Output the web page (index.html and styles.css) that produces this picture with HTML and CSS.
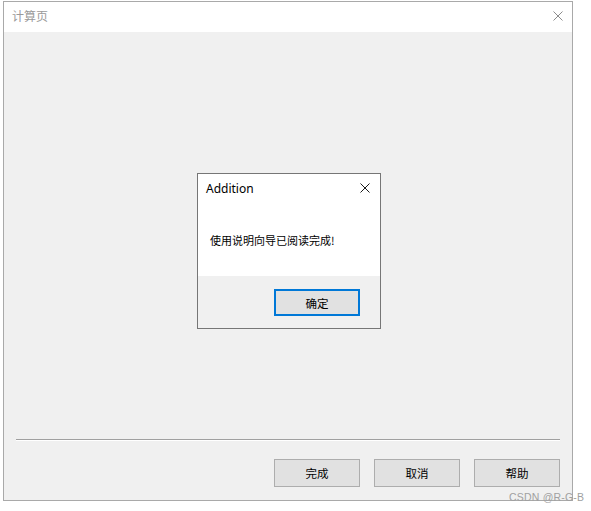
FILE: index.html
```html
<!DOCTYPE html>
<html>
<head>
<meta charset="utf-8">
<link rel="stylesheet" href="styles.css">
</head>
<body>
<div class="window">
  <div class="titlebar">
    <span class="title">计算页</span>
    <svg class="win-close" width="10" height="10" viewBox="0 0 10 10"><path d="M0.5 0.5L9.5 9.5M9.5 0.5L0.5 9.5" stroke="#8c8c8c" stroke-width="1"/></svg>
  </div>
  <div class="content">
    <div class="separator"></div>
    <div class="actions">
      <button class="btn">完成</button>
      <button class="btn">取消</button>
      <button class="btn">帮助</button>
    </div>
  </div>
</div>

<div class="dialog">
  <div class="dlg-main">
    <div class="dlg-title">
      <span class="dlg-caption">Addition</span>
      <svg class="dlg-close" width="10" height="10" viewBox="0 0 10 10"><path d="M0.5 0.5L9.5 9.5M9.5 0.5L0.5 9.5" stroke="#1a1a1a" stroke-width="1"/></svg>
    </div>
    <div class="dlg-msg">使用说明向导已阅读完成!</div>
  </div>
  <div class="dlg-foot">
    <button class="btn btn-default">确定</button>
  </div>
</div>

<div class="watermark">CSDN @R-G-B</div>
</body>
</html>
```
FILE: styles.css
```css
html, body {
  margin: 0;
  padding: 0;
  background: #ffffff;
}
body {
  font-family: "Noto Sans", "Noto Sans CJK SC", sans-serif;
  position: relative;
  width: 591px;
  height: 511px;
  overflow: hidden;
}
.window {
  margin: 1px 0 0 3px;
  width: 570px;
  height: 500px;
  box-sizing: border-box;
  border: 1px solid #a9a9a9;
  display: flex;
  flex-direction: column;
  background: #f0f0f0;
}
.titlebar {
  height: 30px;
  flex: none;
  background: #ffffff;
  display: flex;
  align-items: center;
  justify-content: space-between;
  padding: 0 9px 0 8px;
}
.title {
  font-family: "Noto Sans CJK SC", sans-serif;
  font-size: 12px;
  color: #9a9a9a;
  line-height: 14px;
  margin-top: -2px;
}
.win-close {
  display: block;
  margin-top: -2px;
}
.content {
  flex: 1;
  display: flex;
  flex-direction: column;
  justify-content: flex-end;
  padding: 0 12px 13px 12px;
}
.separator {
  height: 1px;
  background: #a0a0a0;
  border-bottom: 1px solid #ffffff;
  margin-bottom: 18px;
}
.actions {
  display: flex;
  justify-content: flex-end;
  gap: 14px;
}
.btn {
  width: 86px;
  height: 28px;
  box-sizing: border-box;
  border: 1px solid #adadad;
  background: #e1e1e1;
  font-family: "Noto Sans CJK SC", sans-serif;
  font-size: 11.5px;
  color: #000;
  padding: 0;
  margin: 0;
  line-height: 14px;
}
.btn-default {
  height: 27px;
  border: 2px solid #0078d7;
}
.dialog {
  position: absolute;
  left: 197px;
  top: 173px;
  width: 184px;
  height: 156px;
  box-sizing: border-box;
  border: 1px solid #767676;
  background: #f0f0f0;
  display: flex;
  flex-direction: column;
}
.dlg-main {
  height: 102px;
  flex: none;
  background: #ffffff;
}
.dlg-title {
  height: 30px;
  display: flex;
  align-items: center;
  justify-content: space-between;
  padding: 0 10px 0 8px;
}
.dlg-caption {
  font-size: 12px;
  color: #000;
  line-height: 16px;
  margin-top: -1px;
}
.dlg-close {
  display: block;
  margin-top: -2px;
}
.dlg-msg {
  margin-top: 28px;
  padding-left: 12px;
  font-family: "Noto Sans CJK SC", sans-serif;
  font-size: 11px;
  line-height: 16px;
  color: #000;
}
.dlg-foot {
  flex: 1;
  display: flex;
  justify-content: flex-end;
  align-items: flex-start;
  padding: 13px 20px 0 0;
}
.watermark {
  position: absolute;
  left: 509px;
  top: 491px;
  font-family: "Liberation Sans", sans-serif;
  font-size: 10.5px;
  color: #a0a0a0;
  letter-spacing: 0.2px;
}
```
